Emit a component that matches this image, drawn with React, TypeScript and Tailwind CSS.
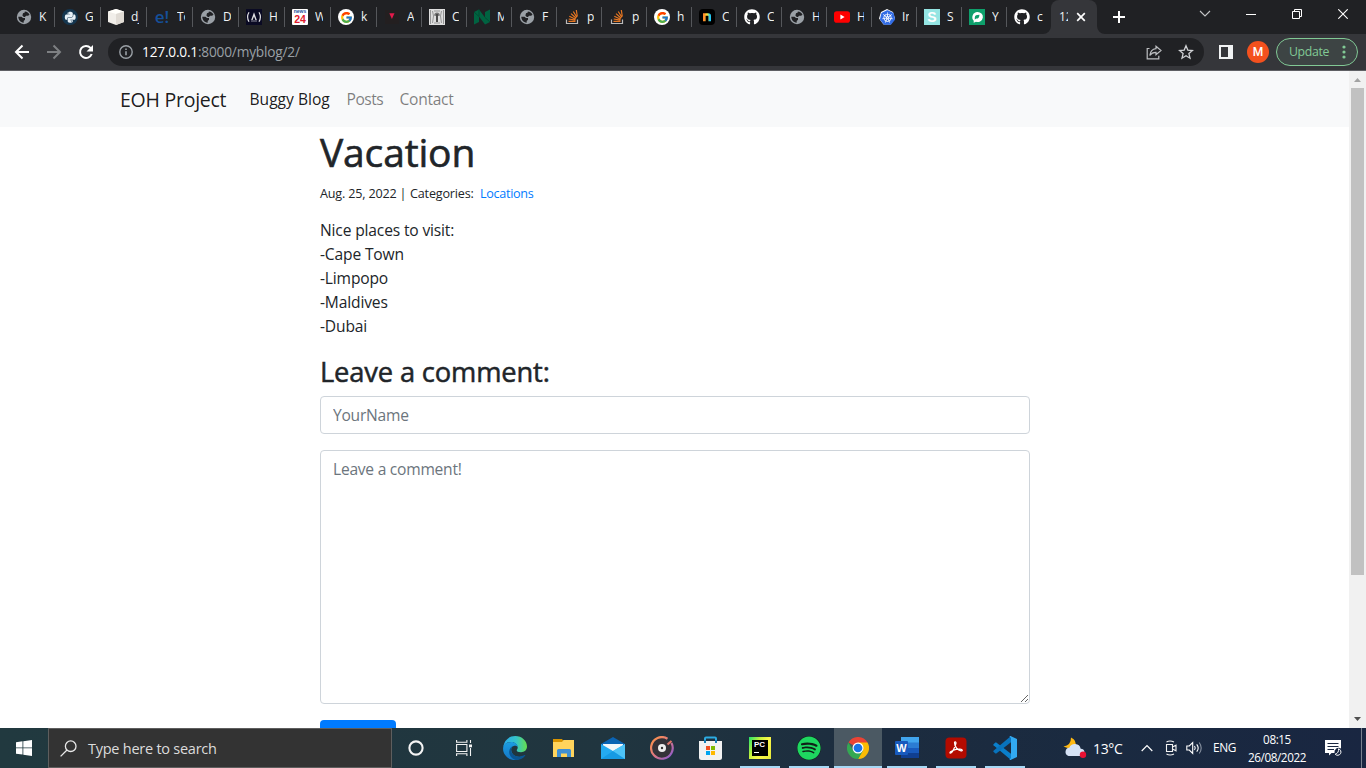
import type { ReactNode } from "react";
import { FaGithub, FaPython, FaSpotify } from "react-icons/fa";
import { FcGoogle } from "react-icons/fc";
import { SiKubernetes } from "react-icons/si";

const Svg = ({ s = 16, vb = 16, children }: { s?: number; vb?: number; children: ReactNode }) => (
  <svg width={s} height={s} viewBox={`0 0 ${vb} ${vb}`} fill="none" className="block shrink-0">
    {children}
  </svg>
);

const Globe = () => (
  <Svg>
    <circle cx="8" cy="8" r="7.2" fill="#9aa0a6" />
    <path d="M2.300 7.800h3.200l1.500 1.300h2v1.600l-1.300 1.200v1.900C4.300 13.500 2.300 10.700 2.300 7.800ZM7 4.200l1.800-.6V2.400c2.200.2 4 1.500 4.700 3.300l-1.500 1h-2L9 8H7.800L6.400 6.500Z" fill="#202124" />
  </Svg>
);
const Python = () => (
  <span className="flex h-4 w-4 items-center justify-center rounded-full bg-[#15364f] text-[12.5px] text-[#e8f1f7]"><FaPython /></span>
);
const Cube = () => (
  <Svg>
    <path d="M0 2.500 8 0l8 2.500V13L8 16 0 13Z" fill="#f1eee9" />
    <path d="M0 2.500 8 5l8-2.500L8 0Z" fill="#fffefa" />
    <path d="M8 5l8-2.500V13l-8 3Z" fill="#e0dbd4" />
  </Svg>
);
const Eoh = () => <span className="font-['Open_Sans',sans-serif] text-[17px] leading-4 font-semibold text-[#15509b]">e!</span>;
const Fcc = () => (
  <Svg>
    <path d="M0 0h16v16H0z" fill="#0a0a23" />
    <path d="M3 3.300Q.2 8 3 12.700M13 3.300Q15.800 8 13 12.700" stroke="#dfdfe2" strokeWidth="1.200" />
    <path d="M8 3.200 10.800 11H9.400L8 7.500 6.600 11H5.200Z" fill="#dfdfe2" />
    <path d="M5 12h6" stroke="#8d8d9c" />
  </Svg>
);
const News = () => (
  <span className="flex h-4 w-4 flex-col items-center overflow-hidden rounded-[1px] bg-white font-['Liberation_Sans',sans-serif] font-bold">
    <span className="text-[5px] leading-[5px] text-[#1b4f9c]">news</span>
    <span className="text-[10.5px] leading-[10px] text-[#e01b2e]">24</span>
  </span>
);
const Google = () => (
  <span className="flex h-4 w-4 items-center justify-center rounded-full bg-white text-[13px]"><FcGoogle /></span>
);
const Triangle = () => (
  <Svg>
    <path d="M1 1h14v14H1z" fill="#231f20" />
    <path d="M5.300 4.300h5.200L7.900 10Z" fill="#e51a4b" />
  </Svg>
);
const Sketch = () => (
  <Svg>
    <path d="M0 0h16v16H0z" fill="#dedede" />
    <path d="M1.500 1v14M3.500 2l1 5-1 7M12.500 2l-1 5 1 7M14.500 1v14M5 2h6M5 14h6" stroke="#969696" />
    <path d="M5 6.500Q5.500 3.500 8 3.500t3 3L9 7v6H7V7Z" fill="#777" />
    <path d="M8 5v8" stroke="#222" />
  </Svg>
);
const Nedbank = () => (
  <Svg>
    <path d="M0 3 5 .5l6 8V3L16 .5V13l-5 2.500-6-8V13L0 15.500Z" fill="#006341" />
    <path d="M5 .5v7L0 3M11 8.500 16 13" stroke="#004d33" />
  </Svg>
);
const Stack = () => (
  <Svg>
    <path d="M2.500 10.500v4h11v-4" stroke="#bcbbbb" strokeWidth="1.200" />
    <path d="M4.500 12.400h7M4.700 10l6.800 1.200M5.300 7.300l6.300 3M7 4.600l5.200 4.700M9.300 2.500l3.500 5.800M12.300 1l1 6.500" stroke="#e87722" strokeWidth="1.200" />
  </Svg>
);
const Nn = () => (
  <Svg>
    <defs><linearGradient id="nn"><stop offset="0" stopColor="#ff8b2b" /><stop offset=".5" stopColor="#ffe62e" /><stop offset="1" stopColor="#25c9f5" /></linearGradient></defs>
    <rect width="16" height="16" rx="4" fill="#000" />
    <path d="M5.300 12.200V5.500h3.900q1.500 0 1.500 1.500v5.200" stroke="url(#nn)" strokeWidth="2.600" />
  </Svg>
);
const Github = () => <FaGithub className="h-4 w-4 text-white" />;
const Youtube = () => (
  <Svg>
    <rect y="2.200" width="16" height="11.500" rx="2.800" fill="#f00" />
    <path d="M6.400 5.500v5l4.200-2.500Z" fill="#fff" />
  </Svg>
);
const Kube = () => (
  <span className="relative flex h-4 w-4 items-center justify-center">
    <svg width="16" height="16" viewBox="0 0 16 16" className="absolute inset-0"><path d="m8 0 6 3 2 6.500L11.500 15.500h-7L0 9.500 2 3Z" fill="#fff" /></svg>
    <SiKubernetes className="relative h-[15px] w-[15px] text-[#326ce5]" />
  </span>
);
const Ess = () => <span className="flex h-4 w-4 items-center justify-center bg-[#95e5e3] font-['Liberation_Sans',sans-serif] text-[14px] leading-4 font-bold text-white">S</span>;
const Green = () => (
  <Svg>
    <path d="M0 0h16v16H0z" fill="#0e9f6b" />
    <path d="M8.300 3a5.400 5 0 1 1-1.300 9.800l-2.300.9v-2A5.200 5.200 0 0 1 8.300 3Z" fill="#fff" />
    <path d="M5.800 8.500c0-2.200 1.700-2.800 4.700-2.800-.3 2.800-1 4-3.200 3.900l-1.500 1Z" fill="#0e9f6b" />
  </Svg>
);

const tabs: { icon: ReactNode; t: string; narrow?: boolean }[] = [
  { icon: <Globe />, t: "K" },
  { icon: <Python />, t: "G" },
  { icon: <Cube />, t: "dj" },
  { icon: <Eoh />, t: "To" },
  { icon: <Globe />, t: "D" },
  { icon: <Fcc />, t: "H" },
  { icon: <News />, t: "W" },
  { icon: <Google />, t: "k" },
  { icon: <Triangle />, t: "A", narrow: true },
  { icon: <Sketch />, t: "C", narrow: true },
  { icon: <Nedbank />, t: "M", narrow: true },
  { icon: <Globe />, t: "F", narrow: true },
  { icon: <Stack />, t: "p", narrow: true },
  { icon: <Stack />, t: "p", narrow: true },
  { icon: <Google />, t: "h", narrow: true },
  { icon: <Nn />, t: "C", narrow: true },
  { icon: <Github />, t: "C", narrow: true },
  { icon: <Globe />, t: "H", narrow: true },
  { icon: <Youtube />, t: "H", narrow: true },
  { icon: <Kube />, t: "In", narrow: true },
  { icon: <Ess />, t: "S", narrow: true },
  { icon: <Green />, t: "Y", narrow: true },
  { icon: <Github />, t: "c", narrow: true },
];

function TabStrip() {
  return (
    <div className="flex h-[34px] shrink-0 bg-[#202124] pl-[9px] text-[12px] text-[#f1f3f4]">
      {tabs.map((tab, i) => (
        <div key={i} className={`flex shrink-0 items-center pl-[7px] ${tab.narrow ? "w-[45px]" : "w-[46px]"}`}>
          <span className="flex h-4 w-4 shrink-0 items-center justify-center">{tab.icon}</span>
          <span className={`ml-[7px] shrink-0 overflow-hidden whitespace-nowrap ${tab.narrow ? "w-[7px]" : "w-[8px]"}`}>{tab.t}</span>
          <span className={`ml-auto h-5 w-px ${i === tabs.length - 1 ? "" : "bg-[#55575b]"}`} />
        </div>
      ))}
      <div className="flex h-[34px] shrink-0 items-end">
        <svg width="8" height="8" className="-ml-[9px]"><path d="M8 0v8H0a8 8 0 0 0 8-8Z" fill="#35363a" /></svg>
        <div className="flex h-full w-[46px] items-center rounded-t-lg bg-[#35363a] pl-[8px]">
          <span className="w-[9px] shrink-0 overflow-hidden whitespace-nowrap">127</span>
          <svg width="10" height="10" className="ml-[8px]"><path d="m1.200 1.200 7.600 7.600m0-7.600L1.200 8.800" stroke="#fff" strokeWidth="1.700" /></svg>
        </div>
        <svg width="8" height="8"><path d="M0 0v8h8a8 8 0 0 1-8-8Z" fill="#35363a" /></svg>
      </div>
      <svg width="12" height="12" className="mt-[11px] ml-[8px]"><path d="M6 0v12M0 6h12" stroke="#fff" strokeWidth="2" /></svg>
      <div className="ml-auto flex pr-[18px]">
        <svg width="12" height="8" className="mt-[10px]"><path d="m1 1 5 5 5-5" stroke="#c5c6c8" strokeWidth="1.100" fill="none" /></svg>
        <svg width="10" height="3" className="mt-[13px] ml-[35px]"><path d="M0 1.500h10" stroke="#fff" /></svg>
        <svg width="10" height="10" className="mt-[9px] ml-[36px]"><path d="M.5 2.500h7v7h-7zM2.500 2V.5h7v7H8" stroke="#fff" fill="none" /></svg>
        <svg width="10" height="10" className="mt-[9px] ml-[36px]"><path d="m.3.300 9.400 9.400m0-9.400L.3 9.700" stroke="#fff" strokeWidth="1.100" /></svg>
      </div>
    </div>
  );
}

function Toolbar() {
  return (
    <div className="flex h-[37px] shrink-0 items-center border-b border-[#5f6064] bg-[#35363a] pl-[14px]">
      <svg width="16" height="16" fill="none" stroke="#fff" strokeWidth="2"><path d="M15 8H2.500M8.500 1.500 2 8l6.500 6.500" /></svg>
      <svg width="16" height="16" fill="none" stroke="#7e8083" strokeWidth="2" className="ml-4"><path d="M1 8h12.500M7.500 1.500 14 8l-6.500 6.500" /></svg>
      <svg width="16" height="16" viewBox="0 0 16 16" fill="none" stroke="#fff" strokeWidth="2" className="ml-4"><path d="M13.700 10A6 6 0 1 1 12.500 3.900L14 5.500" /><path d="M15 1v6.500H8.500Z" fill="#fff" stroke="none" /></svg>
      <div className="ml-[14px] flex h-7 w-[1096px] items-center rounded-full bg-[#202124] pl-[11px]">
        <svg width="14" height="14" fill="none" stroke="#9aa0a6" strokeWidth="1.400"><circle cx="7" cy="7" r="6.200" /><path d="M7 6.300v4M7 3.500v1.400" strokeWidth="1.600" /></svg>
        <span className="ml-[9px] pt-px text-[13.7px] tracking-[-0.2px] whitespace-nowrap text-[#9aa0a6]"><span className="text-white">127.0.0.1</span>:8000/myblog/2/</span>
        <div className="ml-auto flex items-center gap-[16px] pr-[10px]">
          <svg width="16" height="16" viewBox="0 0 16 16" fill="none" stroke="#bcbec1" strokeWidth="1.200"><path d="M3.500 4.500H1.200v10.300h11.600v-3" /><path d="M10 2.200 15 6.500 10 10.800V8.300Q6 8.200 3.800 11.500 4.600 5.300 10 4.700Z" /></svg>
          <svg width="16" height="16" viewBox="0 0 16 16" fill="none" stroke="#d0d2d5" strokeWidth="1.300"><path d="m8 1.800 1.800 4.300 4.700.4-3.600 3.100 1.100 4.600-4-2.500-4 2.500 1.100-4.600L1.500 6.500l4.700-.4Z" /></svg>
        </div>
      </div>
      <svg width="14" height="14" className="ml-[15px]"><path d="M0 0h14v14H0zM2 2v10h7V2z" fill="#f1f3f4" fillRule="evenodd" /></svg>
      <span className="ml-[14px] flex h-[22px] w-[22px] items-center justify-center rounded-full bg-[#f4511e] font-[Roboto,sans-serif] text-[12px] font-medium text-white">M</span>
      <div className="ml-[7px] flex h-7 w-[82px] items-center rounded-full border border-[#81c995] bg-[#3d4444] pl-[12px] text-[12.3px] text-[#81c995]">
        <span className="w-[39px] tracking-[-0.35px]">Update</span>
        <svg width="4" height="14" fill="#81c995" className="ml-[14px]"><circle cx="2" cy="2" r="1.600" /><circle cx="2" cy="7" r="1.600" /><circle cx="2" cy="12" r="1.600" /></svg>
      </div>
    </div>
  );
}

function Page() {
  return (
    <div className="h-[657px] w-[1349px] shrink-0 overflow-hidden bg-white text-[15.6px] leading-6 tracking-[-0.16px] text-[#212529]">
      <nav className="flex h-14 items-center bg-[#f8f9fa] pl-[120px] whitespace-nowrap">
        <span className="w-[129.500px] pt-px text-[19.5px] tracking-[-0.25px] text-black/90">EOH Project</span>
        <span className="w-[97px] tracking-[0px] text-black/90">Buggy Blog</span>
        <span className="w-[53px] tracking-[-0.5px] text-black/50">Posts</span>
        <span className="tracking-[-0.28px] text-black/50">Contact</span>
      </nav>
      <main className="ml-[320px] w-[710px]">
        <h1 className="h-14 pt-px text-[39px] leading-[48px] tracking-[-0.15px] [-webkit-text-stroke:0.6px_#212529]">Vacation</h1>
        <p className="flex h-[35px] text-[12.6px] leading-[21px] tracking-[-0.18px] whitespace-nowrap">
          <span className="w-[90px]">Aug. 25, 2022&nbsp;|</span>
          <span className="w-[70px]">Categories:</span>
          <span className="tracking-[-0.3px] text-[#007bff]">Locations</span>
        </p>
        <p className="mb-4">
          Nice places to visit:<br />-Cape Town<br />-Limpopo<br />-Maldives<br />-Dubai
        </p>
        <h3 className="mb-[6px] text-[27.3px] leading-[36px] tracking-[-0.15px] [-webkit-text-stroke:0.5px_#212529]">Leave a comment:</h3>
        <input className="block h-[38px] w-full rounded border border-[#ced4da] px-3 tracking-[-0.25px] placeholder:text-[#6c757d]" placeholder="YourName" />
        <textarea className="mt-4 block h-[254px] w-full resize rounded border border-[#ced4da] px-3 py-[6px] tracking-[-0.25px] placeholder:text-[#6c757d]" placeholder="Leave a comment!" />
        <button className="mt-4 block h-[38px] w-[76px] rounded bg-[#007bff] text-white">Submit</button>
      </main>
    </div>
  );
}

function Scrollbar() {
  return (
    <div className="flex w-[17px] flex-col items-center bg-[#f1f1f1]">
      <svg width="17" height="17"><path d="M5 11h7L8.500 7Z" fill="#a3a3a3" /></svg>
      <div className="h-[487px] w-[13px] bg-[#c1c1c1]" />
      <svg width="17" height="17" className="mt-auto"><path d="M5 6h7l-3.500 4Z" fill="#505050" /></svg>
    </div>
  );
}

const Edge = () => (
  <Svg s={24} vb={24}>
    <defs>
      <linearGradient id="e1" x1="0" x2="1"><stop stopColor="#2aa9ed" /><stop offset=".55" stopColor="#35c4c9" /><stop offset="1" stopColor="#66dd4c" /></linearGradient>
      <linearGradient id="e2" x1="0" y1="0" x2="0" y2="1"><stop stopColor="#1b9de2" /><stop offset="1" stopColor="#1476c6" /></linearGradient>
    </defs>
    <path d="M.3 11C1 4.500 6 0 12.200 0 19 0 24 5 24 10.500c0 3.500-2.600 5.700-6 5.700-3 0-4.300-1-4.300-2 0-.7 1-1 1-2.700C14.700 8.500 12 6 8.300 6 4 6 1.500 8.300.3 11Z" fill="url(#e1)" />
    <path d="M.1 12C.5 8.600 4 6 8.300 6c3.700 0 6.200 2.300 6.400 5-1-1.300-2.600-1.600-4-1C8 11 7.500 14 9 17c1.500 3 5.500 5 11.500 3.300C18 23 15 24 12 24 5 24-.4 18.500.1 12Z" fill="url(#e2)" />
    <path d="M10.700 10C8 11 7.500 14 9 17c2 3.800 7 4.500 12.500 2 .7-.3 1 .2.600.7C20 22.600 16.500 24 13 24c-4.500-1-7-4.700-6.800-8.500C6.400 12.500 8.300 10.300 10.700 10Z" fill="#0b5592" />
  </Svg>
);
const Folder = () => (
  <Svg s={24} vb={24}>
    <path d="M1 3h9l1.500 2v3H1Z" fill="#d99400" />
    <path d="M1 6h9l1.500-2H22v17H1Z" fill="#ffd45c" />
    <path d="M5 21v-6.500q0-1.500 1.500-1.500h11q1.500 0 1.500 1.500V21h-4v-3.500H9V21Z" fill="#3e8fd4" />
  </Svg>
);
const Mail = () => (
  <Svg s={24} vb={24}>
    <path d="M0 8 12 1l12 7v5H0Z" fill="#0b64b4" />
    <path d="M2 8h20v8H2Z" fill="#f4f7fa" />
    <path d="M0 8 12 15 24 8v15H0Z" fill="#24aaf0" />
    <path d="M0 23 12 15l12 8Z" fill="#169ae4" />
    <path d="m12 15 12-7v15Z" fill="#4dc3f7" />
  </Svg>
);
const Groove = () => (
  <Svg s={24} vb={24}>
    <defs><linearGradient id="gr" x1="0" y1="0" x2="1" y2="1"><stop stopColor="#ff9645" /><stop offset=".5" stopColor="#df7781" /><stop offset="1" stopColor="#8058d8" /></linearGradient></defs>
    <circle cx="12" cy="12" r="10" fill="#343238" />
    <path d="M17.500 2.700A10.800 10.800 0 1 0 21.500 7" stroke="url(#gr)" strokeWidth="2.200" />
    <path d="M17.500 8.500 21.500 5" stroke="#e0766b" strokeWidth="2.200" />
    <circle cx="12" cy="12" r="4" fill="#eee" /><circle cx="12" cy="12" r="1.200" fill="#333" />
  </Svg>
);
const Store = () => (
  <Svg s={24} vb={24}>
    <path d="M6 6V2.500q0-1 1-1h9q1 0 1 1V6" stroke="#2cabe2" strokeWidth="2" />
    <path d="M0 5h23v16.500q0 2.500-2.500 2.500h-18Q0 24 0 21.500Z" fill="#f2f2f2" />
    <path d="M6 4v3M17 4v3" stroke="#1680b8" strokeWidth="2" />
    <path d="M7 10h4v4H7z" fill="#f25022" /><path d="M12 10h4v4h-4z" fill="#7fba00" /><path d="M7 15h4v4H7z" fill="#00a4ef" /><path d="M12 15h4v4h-4z" fill="#ffb900" />
  </Svg>
);
const Pycharm = () => (
  <span className="flex h-[22px] w-[22px] items-center justify-center bg-[linear-gradient(120deg,#21e56c,#c7f23b_35%,#fcf84a_60%,#e5e83b)]">
    <span className="flex h-4 w-4 flex-col bg-black pl-[2px]">
      <span className="font-['Liberation_Sans',sans-serif] text-[8px] leading-[9px] font-bold text-white">PC</span>
      <span className="mt-[3px] h-px w-[5px] bg-white" />
    </span>
  </span>
);
const Spotify = () => <span className="flex h-6 w-6 rounded-full bg-[#102018]"><FaSpotify className="h-6 w-6 text-[#1ed760]" /></span>;
const Chrome = () => (
  <Svg s={22} vb={48}>
    <path d="M24 24 3.200 12A24 24 0 0 1 44.800 12Z" fill="#ea4335" />
    <path d="M24 12h20.800A24 24 0 0 1 24 48L34.400 30Z" fill="#fbbc04" />
    <path d="M13.600 30 3.200 12A24 24 0 0 0 24 48L34.400 30Z" fill="#34a853" />
    <circle cx="24" cy="24" r="12" fill="#fff" /><circle cx="24" cy="24" r="9.500" fill="#1a73e8" />
  </Svg>
);
const Word = () => (
  <span className="relative flex h-6 w-6">
    <svg width="24" height="24"><path d="M6 1h18v6H6z" fill="#41a5ee" /><path d="M6 6.500h18V12H6z" fill="#2b7cd3" /><path d="M6 12h18v5.500H6z" fill="#185abd" /><path d="M6 17h18v5H6z" fill="#103f91" /></svg>
    <span className="absolute top-[5px] left-0 flex h-[14px] w-[13px] items-center justify-center rounded-[1px] bg-[#185abd] font-['Liberation_Sans',sans-serif] text-[11px] leading-none font-bold text-white">W</span>
  </span>
);
const Acrobat = () => (
  <Svg s={22} vb={22}>
    <rect x=".5" y=".5" width="21" height="21" rx="4" fill="#b30b00" />
    <path d="M5 16c-.8-1.300 5-4 10-3.800 3 .2 2.800 1.800 1 1.600-3-.4-6.500-4-6.500-8 0-1.500 1.800-1.300 1.500.4C10.500 9.500 6.500 17.500 5 16Z" stroke="#fff" strokeWidth="1.200" />
  </Svg>
);
const VsCode = () => (
  <Svg s={24} vb={24}>
    <path d="M.5 8.200 2.300 6.600q.5-.3 1 0L18 17.700V24L.5 9.200q-.5-.5 0-1Z" fill="#0a7fcb" />
    <path d="M.5 15.800 2.300 17.400q.5.300 1 0L18 6.300V0L.5 14.800q-.5.500 0 1Z" fill="#0873bd" />
    <path d="M17.500 0 24 3v18l-6.500 3q-.8.200-1-.5L18 22V2L16.500.5q.2-.7 1-.5Z" fill="#32a9f0" />
  </Svg>
);

const apps: { el: ReactNode; state: "off" | "open" | "active" }[] = [
  { el: <Edge />, state: "off" },
  { el: <Folder />, state: "off" },
  { el: <Mail />, state: "off" },
  { el: <Groove />, state: "off" },
  { el: <Store />, state: "off" },
  { el: <Pycharm />, state: "open" },
  { el: <Spotify />, state: "open" },
  { el: <Chrome />, state: "active" },
  { el: <Word />, state: "open" },
  { el: <Acrobat />, state: "open" },
  { el: <VsCode />, state: "open" },
];

function Taskbar() {
  return (
    <div className="flex h-10 shrink-0 items-center bg-[linear-gradient(90deg,#21393f,#20353f_45%,#1c2c3f_65%,#1a2a40_80%,#192641)] text-white">
      <div className="flex w-12 shrink-0 justify-center">
        <svg width="16" height="16" fill="#fff"><path d="M0 2.200 6.500 1.300v6.200H0zM7.300 1.200 16 0v7.500H7.300zM0 8.300h6.500v6.300L0 13.700zM7.300 8.300H16V16l-8.700-1.200z" /></svg>
      </div>
      <div className="flex h-10 w-[344px] shrink-0 items-center border border-[#5e5e5e] bg-[#333] pl-[11px] text-[14.5px] text-[#dcdcdc]">
        <svg width="17" height="17" fill="none" stroke="#e8e8e8" strokeWidth="1.300"><circle cx="10.700" cy="6.200" r="5.300" /><path d="M7 10 .6 16.400" /></svg>
        <span className="ml-[11px] pt-px tracking-[-0.25px]">Type here to search</span>
      </div>
      <div className="flex w-12 shrink-0 justify-center"><svg width="16" height="16"><circle cx="8" cy="8" r="6.600" stroke="#f4f4f4" strokeWidth="2.100" fill="none" /></svg></div>
      <div className="flex w-[51px] shrink-0 pl-[16px]">
        <svg width="16" height="16" fill="none" stroke="#f2f2f2" strokeWidth="1.100"><path d="M.6 4.500h10.300v7H.6zM.6 0v2.300h10.300V0M.6 16v-2.300h10.300V16M14.500 0v3M14.500 8v8" /><path d="M13 4.500h3v2.800h-3z" fill="#f2f2f2" stroke="none" /></svg>
      </div>
      <div className="flex gap-px">
        {apps.map((a, i) => (
          <div key={i} className={`flex h-10 w-12 flex-col items-center ${a.state === "active" ? "bg-[#4b5963]" : ""}`}>
            <span className="flex h-[38px] items-center pt-[2px]">{a.el}</span>
            {a.state !== "off" && <span className={`h-[2px] bg-[#a6d8f5] ${a.state === "active" ? "w-12" : "w-10"}`} />}
          </div>
        ))}
      </div>
      <div className="ml-[34px] flex h-10 flex-1 items-center whitespace-nowrap">
        <svg width="24" height="24" viewBox="0 0 24 24">
          <path d="M8 1.500Q14.500 5 12 10 8 14 .5 10.500 8 9.500 8 1.500Z" fill="#fdb813" />
          <path d="M5.500 20a4.200 4.200 0 0 1 .8-8.200 6 6 0 0 1 11.400 1A3.700 3.700 0 0 1 19 20Z" fill="#d5e2f5" />
          <circle cx="20" cy="18.800" r="3.200" fill="#e81133" />
        </svg>
        <span className="ml-[6px] w-[48px] pt-px text-[14px] tracking-[-0.35px]">13°C</span>
        <svg width="12" height="8" fill="none" stroke="#fff" strokeWidth="1.200"><path d="m.7 7 5.300-5.500L11.300 7" /></svg>
        <svg width="12" height="16" fill="none" stroke="#f2f2f2" strokeWidth="1.100" className="ml-[12px]"><path d="M1.500 4.500h6v7h-6zM7.500 7 11 5.200v5.600L7.500 9M1.500 2Q5 0 9 2M1.500 14Q5 16 9 14" /></svg>
        <svg width="17" height="14" fill="none" stroke="#fff" strokeWidth="1.100" className="ml-[9px]"><path d="M.8 5h2.500L6.700 1.500v11L3.300 9H.8ZM8.500 5q1.500 2 0 4M10.700 3.300q3 3.700 0 7.400" /><path d="M13.200 1.500q4 5.500 0 11" stroke="#8791a0" /></svg>
        <span className="ml-[10px] w-[34px] text-[11.9px] tracking-[-0.35px]">ENG</span>
        <span className="flex w-[60px] flex-col items-center text-[11.7px] leading-[18px] tracking-[-0.4px]"><span>08:15</span><span>26/08/2022</span></span>
        <svg width="17" height="16" viewBox="0 0 17 16" className="ml-[18px]"><path d="M0 0h16v8.500A4.300 4.300 0 0 0 9.500 13H6.500L4 15.500V13H0Z" fill="#fff" /><path d="M2.500 3.500h11M2.500 6.500h11M2.500 9.500h6.500" stroke="#1b2841" strokeWidth="1.200" /><path d="M13.500 8.800A3.300 3.300 0 1 1 10.200 14.200 4.500 4.500 0 0 0 13.500 8.800Z" fill="none" stroke="#fff" /></svg>
        <span className="mr-1 ml-auto h-10 w-px bg-[#78818e]" />
      </div>
    </div>
  );
}

export default function App() {
  return (
    <div className="flex h-[768px] w-[1366px] flex-col overflow-hidden font-['Open_Sans','Noto_Sans',sans-serif]">
      <TabStrip />
      <Toolbar />
      <div className="flex h-[657px] shrink-0">
        <Page />
        <Scrollbar />
      </div>
      <Taskbar />
    </div>
  );
}
